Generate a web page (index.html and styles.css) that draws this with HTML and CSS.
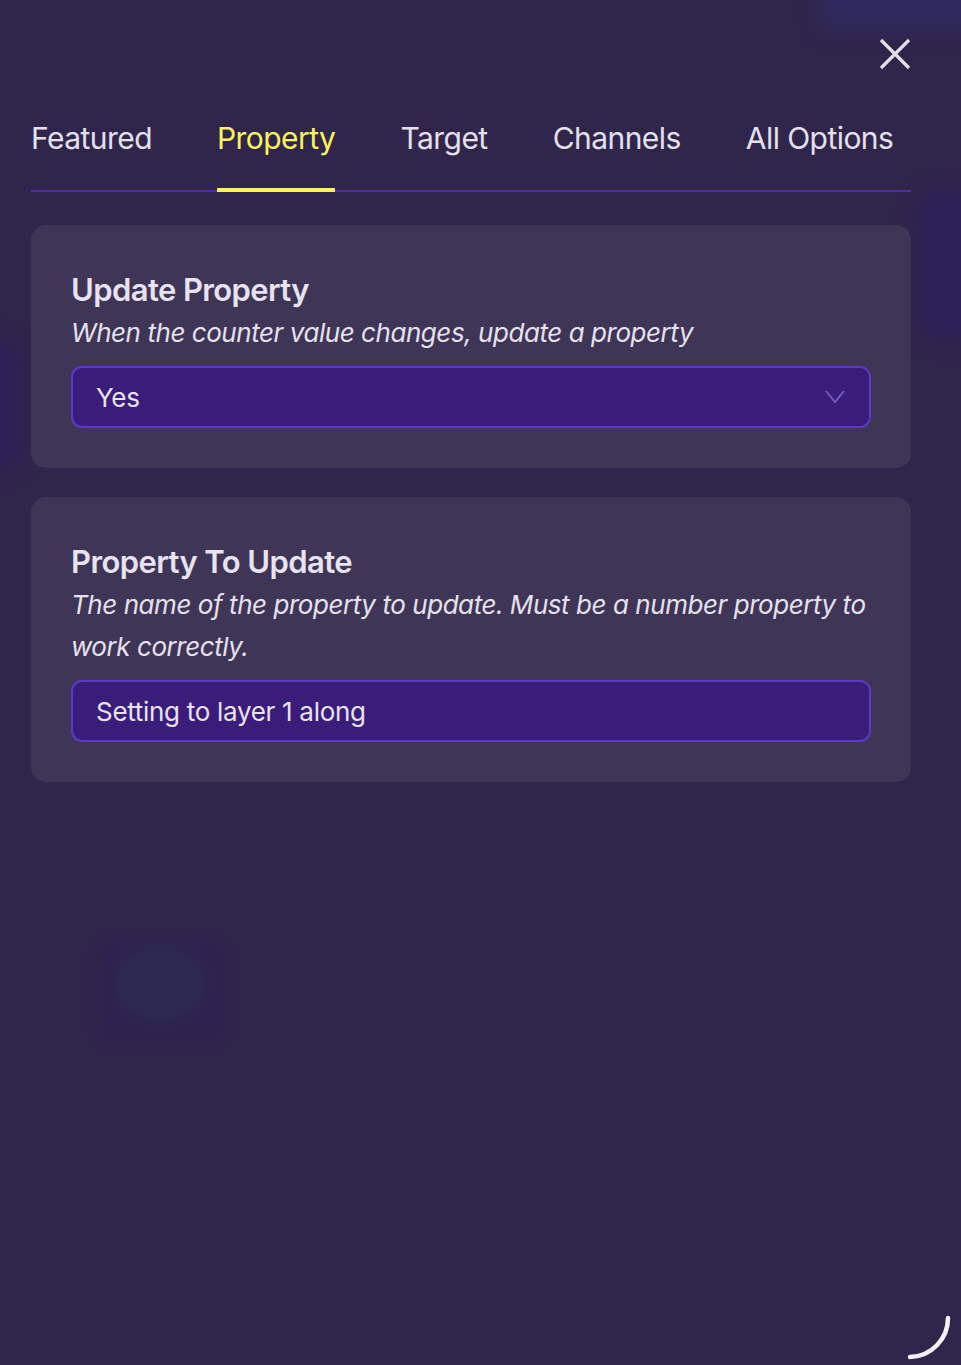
FILE: index.html
```html
<!DOCTYPE html>
<html lang="en">
<head>
<meta charset="utf-8">
<title>Counter options</title>
<link rel="stylesheet" href="styles.css">
</head>
<body>
<div class="backdrop" aria-hidden="true">
  <div class="blob blob-top"></div>
  <div class="blob blob-right"></div>
  <div class="blob blob-left"></div>
  <div class="blob blob-square"><div class="blob-inner"></div></div>
</div>
<main class="panel">
  <header class="panel-head">
    <button class="close" aria-label="Close">
      <svg viewBox="0 0 32 32" width="32" height="32"><path d="M2 2 L30 30 M30 2 L2 30" stroke="#e3dfec" stroke-width="3.2" stroke-linecap="butt" fill="none"/></svg>
    </button>
  </header>
  <nav class="tabs">
    <span class="tab">Featured</span>
    <span class="tab active">Property</span>
    <span class="tab">Target</span>
    <span class="tab">Channels</span>
    <span class="tab">All Options</span>
  </nav>
  <section class="card">
    <h2 class="card-title">Update Property</h2>
    <p class="card-desc">When the counter value changes, update a property</p>
    <div class="field select">
      <span>Yes</span>
      <svg class="chev" viewBox="0 0 20 14" width="20" height="14"><path d="M1 1 L10 12 L19 1" stroke="#7a5ec8" stroke-width="1.8" fill="none"/></svg>
    </div>
  </section>
  <section class="card">
    <h2 class="card-title">Property To Update</h2>
    <p class="card-desc">The name of the property to update. Must be a number property to work correctly.</p>
    <div class="field">
      <span>Setting to layer 1 along</span>
    </div>
  </section>
</main>
<svg class="corner" viewBox="0 0 60 60" width="60" height="60" aria-hidden="true"><path d="M47 13 A 39 39 0 0 1 9 52" stroke="#f4f2f8" stroke-width="4.5" stroke-linecap="round" fill="none"/></svg>
</body>
</html>
```

FILE: styles.css
```css
html, body {
  margin: 0;
  padding: 0;
}
body {
  background: #30254b;
  width: 961px;
  height: 1365px;
  overflow: hidden;
  font-family: Inter, "Noto Sans", "Liberation Sans", sans-serif;
  color: #e6e1ef;
  position: relative;
}
.backdrop {
  position: absolute;
  inset: 0;
  overflow: hidden;
  pointer-events: none;
}
.blob {
  position: absolute;
  filter: blur(10px);
}
.blob-top {
  left: 820px;
  top: -20px;
  width: 170px;
  height: 50px;
  background: #2f2a5e;
  border-radius: 8px;
}
.blob-right {
  left: 915px;
  top: 190px;
  width: 70px;
  height: 150px;
  background: #2d2058;
  border-radius: 30px;
}
.blob-left {
  left: -30px;
  top: 340px;
  width: 50px;
  height: 130px;
  background: #2f1f58;
  border-radius: 20px;
}
.blob-square {
  left: 98px;
  top: 940px;
  width: 126px;
  height: 102px;
  background: #2f2250;
  border-radius: 18px;
  filter: blur(6px);
}
.blob-inner {
  position: absolute;
  left: 18px;
  top: 6px;
  width: 88px;
  height: 74px;
  border-radius: 50%;
  background: #2c2a52;
}
.panel {
  position: relative;
  padding: 38px 50px 0 31px;
}
.panel-head {
  display: flex;
  justify-content: flex-end;
}
.close {
  background: none;
  border: 0;
  padding: 0;
  width: 32px;
  height: 32px;
  display: block;
  cursor: pointer;
}
.close svg {
  display: block;
}
.tabs {
  display: flex;
  gap: 65px;
  margin-top: 50px;
  border-bottom: 2px solid #4d2ca6;
}
.tab {
  font-size: 30px;
  line-height: 36px;
  letter-spacing: -0.55px;
  color: #e5e0ee;
  padding-bottom: 34px;
  white-space: nowrap;
}
.tab.active {
  color: #fbf45c;
  border-bottom: 4px solid #fbf45c;
  margin-bottom: -2px;
  padding-bottom: 30px;
}
.card {
  margin-top: 33px;
  background: #3f3557;
  border-radius: 15px;
  padding: 47px 40px 40px 40px;
}
.card + .card {
  margin-top: 29px;
}
.card-title {
  margin: 0;
  font-size: 31px;
  line-height: 36px;
  font-weight: 600;
  letter-spacing: -0.6px;
  color: #e8e3f0;
}
.card-desc {
  margin: 4px 0 0 0;
  font-size: 26px;
  line-height: 42px;
  font-style: italic;
  letter-spacing: -0.45px;
  color: #e6e1ef;
}
.field {
  margin-top: 12px;
  height: 58px;
  border: 2px solid #5b3bc4;
  border-radius: 11px;
  background: #3a1c7b;
  display: flex;
  align-items: center;
  justify-content: space-between;
  padding: 0 24px 0 23px;
  font-size: 26px;
  letter-spacing: -0.3px;
  color: #e8e2f2;
}
.chev {
  display: block;
}
.corner {
  position: absolute;
  right: 0;
  bottom: 0;
}
```
